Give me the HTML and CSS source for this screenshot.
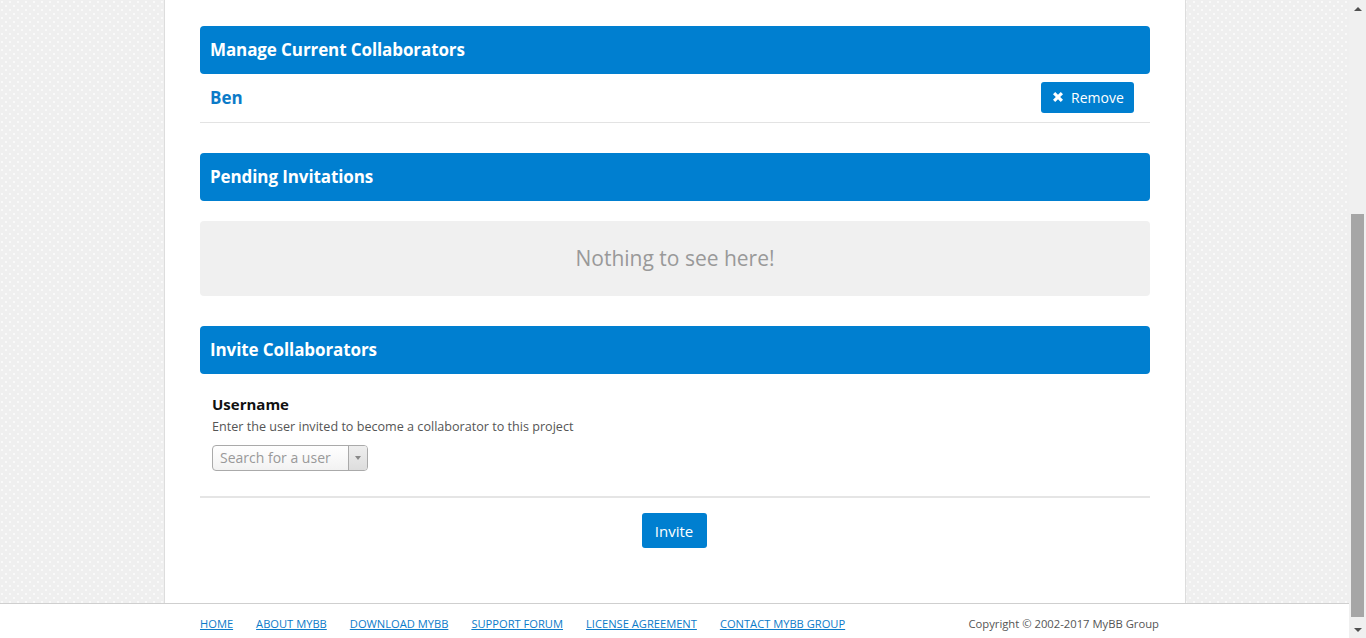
FILE: index.html
```html
<!DOCTYPE html>
<html>
<head>
<meta charset="utf-8">
<link rel="stylesheet" href="styles.css">
</head>
<body>
<div class="viewport">
  <div class="page">
    <div class="main">
      <div class="container">
        <section class="panel">
          <h2 class="panel-head">Manage Current Collaborators</h2>
          <div class="collab-row">
            <a class="collab-name">Ben</a>
            <button class="btn btn-remove">
              <svg class="x-icon" viewBox="0 0 10 10" width="10" height="10"><path d="M2.2 0 L5 2.8 L7.8 0 L10 2.2 L7.2 5 L10 7.8 L7.8 10 L5 7.2 L2.2 10 L0 7.8 L2.8 5 L0 2.2 Z" fill="#fff"/></svg>
              Remove
            </button>
          </div>
        </section>
        <section class="panel">
          <h2 class="panel-head">Pending Invitations</h2>
          <div class="empty">Nothing to see here!</div>
        </section>
        <section class="panel">
          <h2 class="panel-head">Invite Collaborators</h2>
          <div class="form-group">
            <div class="label">Username</div>
            <div class="help">Enter the user invited to become a collaborator to this project</div>
            <div class="select">
              <span class="select-text">Search for a user</span>
              <span class="select-arrow"><svg viewBox="0 0 6 4" width="6" height="4"><path d="M0 0 H6 L3 4 Z" fill="#888"/></svg></span>
            </div>
          </div>
          <div class="form-actions">
            <button class="btn btn-invite">Invite</button>
          </div>
        </section>
      </div>
    </div>
    <footer class="footer">
      <nav class="footer-links">
        <a>HOME</a>
        <a>ABOUT MYBB</a>
        <a>DOWNLOAD MYBB</a>
        <a>SUPPORT FORUM</a>
        <a>LICENSE AGREEMENT</a>
        <a>CONTACT MYBB GROUP</a>
      </nav>
      <div class="copyright">Copyright © 2002-2017 MyBB Group</div>
    </footer>
  </div>
  <div class="scrollbar">
    <div class="sb-btn"><svg viewBox="0 0 8 4" width="8" height="4"><path d="M0 4 L4 0 L8 4 Z" fill="#505050"/></svg></div>
    <div class="sb-track">
      <div class="sb-thumb"></div>
    </div>
    <div class="sb-btn"><svg viewBox="0 0 8 4" width="8" height="4"><path d="M0 0 L8 0 L4 4 Z" fill="#505050"/></svg></div>
  </div>
</div>
</body>
</html>
```
FILE: styles.css
```css
* { box-sizing: border-box; }
html, body { margin: 0; padding: 0; height: 100%; overflow: hidden; }
body {
  font-family: "Open Sans", "Liberation Sans", sans-serif;
  color: #333;
}
.viewport {
  display: flex;
  height: 638px;
  width: 1366px;
}
.page {
  flex: 1;
  display: flex;
  flex-direction: column;
  background-color: #efefef;
  background-image:
    radial-gradient(circle at 2px 2px, #f9f9f9 1px, transparent 1.5px),
    radial-gradient(circle at 6px 6px, #f9f9f9 1px, transparent 1.5px);
  background-size: 8px 8px;
}
.main {
  flex: 1;
  display: flex;
  justify-content: center;
  padding-left: 1px;
}
.container {
  width: 1022px;
  background: #fff;
  border-left: 1px solid #ddd;
  border-right: 1px solid #ddd;
  padding: 26px 35px 0 35px;
}
.panel { margin-bottom: 30px; }
.panel:last-child { margin-bottom: 0; }
.panel-head {
  margin: 0;
  height: 48px;
  line-height: 48px;
  padding: 0 10px;
  background: #007fd0;
  color: #fff;
  font-size: 17px;
  font-weight: 700;
  letter-spacing: -0.1px;
  border-radius: 4px;
}
.collab-row {
  display: flex;
  align-items: center;
  justify-content: space-between;
  height: 49px;
  padding: 0 16px 1px 10px;
  border-bottom: 1px solid #e3e3e3;
}
.collab-name {
  color: #0b7bc8;
  font-weight: 700;
  font-size: 17px;
}
.btn {
  font-family: "Open Sans", "Liberation Sans", sans-serif;
  background: #007fd0;
  color: #fff;
  border: none;
  border-radius: 3px;
  cursor: pointer;
}
.btn-remove {
  display: flex;
  align-items: center;
  gap: 8px;
  height: 31px;
  width: 93px;
  padding: 0 0 0 12px;
  font-size: 14px;
  margin-top: -1px;
}
.x-icon { display: block; }
.empty {
  margin-top: 20px;
  height: 75px;
  line-height: 75px;
  background: #f0f0f0;
  border-radius: 4px;
  text-align: center;
  font-size: 21px;
  color: #999;
}
.form-group {
  padding: 20px 12px 25px;
  border-bottom: 2px solid #e5e5e5;
}
.label {
  font-size: 15px;
  font-weight: 700;
  color: #111;
  line-height: 20px;
}
.help {
  margin-top: 4px;
  font-size: 12.6px;
  line-height: 18px;
  color: #555;
}
.select {
  margin-top: 9px;
  width: 156px;
  height: 26px;
  display: flex;
  border: 1px solid #aaa;
  border-radius: 4px;
  background: linear-gradient(#ffffff, #f2f2f2);
}
.select-text {
  flex: 1;
  padding-left: 7px;
  font-size: 14px;
  line-height: 24px;
  color: #999;
}
.select-arrow {
  width: 19px;
  border-left: 1px solid #aaa;
  background: linear-gradient(#eee, #ddd);
  border-radius: 0 3px 3px 0;
  display: flex;
  align-items: center;
  justify-content: center;
}
.select-arrow svg { display: block; }
.form-actions {
  display: flex;
  justify-content: center;
  padding: 15px 0 55px;
}
.btn-invite {
  height: 35px;
  width: 65px;
  font-size: 15px;
  padding: 0;
  margin-left: -2px;
}
.footer {
  height: 35px;
  flex: none;
  background: #fff;
  border-top: 1px solid #cfcfcf;
  display: flex;
  align-items: center;
  justify-content: space-between;
  padding: 4px 190px 0 200px;
}
.footer-links {
  display: flex;
  gap: 23px;
}
.footer-links a {
  font-size: 11.15px;
  color: #0c7bc9;
  text-decoration: underline;
}
.copyright {
  font-size: 11.25px;
  color: #555;
}
.scrollbar {
  width: 17px;
  flex: none;
  background: #f0f0f0;
  display: flex;
  flex-direction: column;
}
.sb-btn {
  height: 17px;
  display: flex;
  align-items: center;
  justify-content: center;
}
.sb-track {
  flex: 1;
  display: flex;
  flex-direction: column;
  justify-content: flex-end;
  padding: 0 2px 4px 2px;
}
.sb-thumb {
  height: 403px;
  background: #a6a6a6;
}
```
